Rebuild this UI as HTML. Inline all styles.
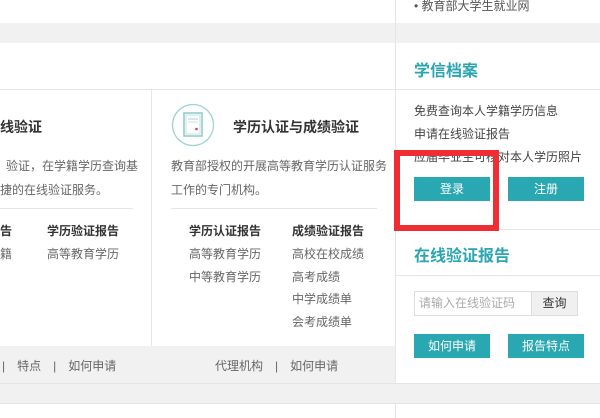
<!DOCTYPE html>
<html><head><meta charset="utf-8"><style>
*{margin:0;padding:0;box-sizing:border-box}
body{width:600px;height:418px;overflow:hidden;background:#fff;position:relative;font-family:"Liberation Sans","Noto Sans CJK SC",sans-serif;color:#333}
.a{position:absolute;white-space:nowrap}
.g{background:#f1f1f1}
.t{font-size:12px;color:#666}
.h{font-size:12px;color:#333;font-weight:bold}
.btn{position:absolute;background:#2aa8b2;color:#fff;font-size:12px;text-align:center;line-height:24px;width:76px;height:24px}
</style></head><body>
<div class="a g" style="left:0;top:23px;width:600px;height:20px"></div>
<div class="a" style="left:0;top:89px;width:395px;height:1px;background:#e6e6e6"></div>
<div class="a" style="left:395px;top:0;width:1px;height:418px;background:#e6e6e6"></div>
<div class="a" style="left:151px;top:90px;width:1px;height:293px;background:#e6e6e6"></div>
<div class="a g" style="left:0;top:346px;width:395px;height:37px"></div>
<div class="a g" style="left:0;top:383px;width:600px;height:21px;border-top:1px solid #e4e4e4;border-bottom:1px solid #e4e4e4"></div>

<div class="a t" style="left:414px;top:-3px;color:#555">• 教育部大学生就业网</div>

<!-- left panel -->
<div class="a" style="left:-14px;top:117px;font-size:14px;font-weight:bold">在线验证</div>
<div class="a t" style="left:-6px;top:157px">　验证，在学籍学历查询基</div>
<div class="a t" style="left:-12px;top:181px">便捷的在线验证服务。</div>
<div class="a" style="left:0;top:208px;width:133px;height:1px;background:#e6e6e6"></div>
<div class="a h" style="left:-12px;top:222px">报告</div>
<div class="a h" style="left:47px;top:222px">学历验证报告</div>
<div class="a t" style="left:-12px;top:245px">学籍</div>
<div class="a t" style="left:47px;top:245px">高等教育学历</div>
<div class="a t" style="left:2px;top:357px">|　特点　|　如何申请</div>

<!-- middle panel -->
<svg class="a" style="left:171px;top:103px" width="44" height="44" viewBox="0 0 44 44">
<circle cx="22" cy="22" r="20.5" fill="none" stroke="#9fd3d3" stroke-width="1.3"/>
<rect x="13" y="10" width="18" height="23" fill="none" stroke="#8ccaca" stroke-width="1.5"/>
<rect x="15" y="12" width="14" height="19" fill="none" stroke="#c3e3e3" stroke-width="1"/>
<line x1="17" y1="16" x2="27" y2="16" stroke="#9fd3d3"/><line x1="17" y1="19" x2="27" y2="19" stroke="#c3e3e3"/>
<circle cx="25.5" cy="26" r="1.3" fill="#e04040"/>
</svg>
<div class="a" style="left:233px;top:117px;font-size:14px;font-weight:bold">学历认证与成绩验证</div>
<div class="a t" style="left:171px;top:157px">教育部授权的开展高等教育学历认证服务</div>
<div class="a t" style="left:171px;top:181px">工作的专门机构。</div>
<div class="a" style="left:171px;top:208px;width:206px;height:1px;background:#e6e6e6"></div>
<div class="a h" style="left:189px;top:222px">学历认证报告</div>
<div class="a h" style="left:292px;top:222px">成绩验证报告</div>
<div class="a t" style="left:189px;top:245px">高等教育学历</div>
<div class="a t" style="left:189px;top:268px">中等教育学历</div>
<div class="a t" style="left:292px;top:245px">高校在校成绩</div>
<div class="a t" style="left:292px;top:268px">高考成绩</div>
<div class="a t" style="left:292px;top:290px">中学成绩单</div>
<div class="a t" style="left:292px;top:313px">会考成绩单</div>
<div class="a t" style="left:215px;top:357px">代理机构　|　如何申请</div>

<!-- right column -->
<div class="a" style="left:414px;top:57px;font-size:16px;color:#2aa6b0;font-weight:bold">学信档案</div>
<div class="a" style="left:396px;top:89px;width:204px;height:1px;background:#e6e6e6"></div>
<div class="a t" style="left:414px;top:102px;color:#444">免费查询本人学籍学历信息</div>
<div class="a t" style="left:414px;top:125px;color:#444">申请在线验证报告</div>
<div class="a t" style="left:414px;top:148px;color:#444">应届毕业生可核对本人学历照片</div>
<div class="btn" style="left:414px;top:177px">登录</div>
<div class="btn" style="left:508px;top:177px">注册</div>
<div class="a" style="left:396px;top:229px;width:204px;height:1px;background:#e6e6e6"></div>
<div class="a" style="left:414px;top:242px;font-size:16px;color:#2aa6b0;font-weight:bold">在线验证报告</div>
<div class="a" style="left:396px;top:275px;width:204px;height:1px;background:#e6e6e6"></div>
<div class="a" style="left:414px;top:291px;width:118px;height:25px;border:1px solid #ddd;font-size:12px;color:#aaa;line-height:23px;padding-left:4px">请输入在线验证码</div>
<div class="a" style="left:532px;top:291px;width:46px;height:25px;border:1px solid #ddd;border-left:none;background:#f0f0f0;font-size:12px;line-height:23px;text-align:center">查询</div>
<div class="btn" style="left:414px;top:334px">如何申请</div>
<div class="btn" style="left:508px;top:334px">报告特点</div>

<div class="a" style="left:394px;top:150px;width:105px;height:81px;border:6px solid #ee2e32"></div>
</body></html>
